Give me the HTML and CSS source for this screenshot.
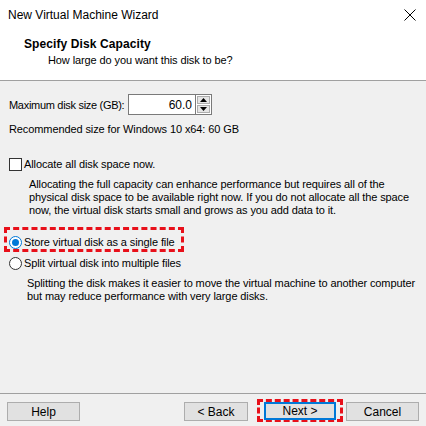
FILE: index.html
```html
<!DOCTYPE html>
<html>
<head>
<meta charset="utf-8">
<link rel="stylesheet" href="styles.css">
</head>
<body>
<div class="window">
  <div class="titlebar">
    <span class="title">New Virtual Machine Wizard</span>
    <svg class="close" width="12" height="12" viewBox="0 0 12 12"><path d="M0.5 0.5L11.5 11.5M11.5 0.5L0.5 11.5" stroke="#000" stroke-width="1"/></svg>
  </div>
  <div class="header">
    <div class="h-title">Specify Disk Capacity</div>
    <div class="h-sub">How large do you want this disk to be?</div>
  </div>
  <div class="body">
    <div class="size-row">
      <span class="label">Maximum disk size (GB):</span>
      <div class="spin">
        <div class="spin-input">60.0</div>
        <div class="spin-btns">
          <div class="spin-btn"><svg width="7" height="4" viewBox="0 0 7 4"><path d="M3.5 0L7 4H0z" fill="#000"/></svg></div>
          <div class="spin-btn"><svg width="7" height="4" viewBox="0 0 7 4"><path d="M0 0H7L3.5 4z" fill="#000"/></svg></div>
        </div>
      </div>
    </div>
    <div class="rec">Recommended size for Windows 10 x64: 60 GB</div>
    <div class="opt check-row">
      <span class="checkbox"></span>
      <span>Allocate all disk space now.</span>
    </div>
    <p class="desc d1">Allocating the full capacity can enhance performance but requires all of the<br>physical disk space to be available right now. If you do not allocate all the space<br>now, the virtual disk starts small and grows as you add data to it.</p>
    <div class="hl">
      <div class="opt">
        <span class="radio on"></span>
        <span>Store virtual disk as a single file</span>
      </div>
    </div>
    <div class="opt r2">
      <span class="radio"></span>
      <span>Split virtual disk into multiple files</span>
    </div>
    <p class="desc d2">Splitting the disk makes it easier to move the virtual machine to another computer<br>but may reduce performance with very large disks.</p>
  </div>
  <div class="footer">
    <button class="btn">Help</button>
    <div class="spacer"></div>
    <button class="btn back">&lt; Back</button>
    <div class="hl2"><button class="btn next">Next &gt;</button></div>
    <button class="btn cancel">Cancel</button>
  </div>
</div>
</body>
</html>
```
FILE: styles.css
```css
* { box-sizing: border-box; }
html, body { margin: 0; padding: 0; }
body {
  width: 426px; height: 426px; overflow: hidden;
  font-family: "Liberation Sans", Arial, sans-serif;
  font-size: 11px; letter-spacing: -0.1px; color: #000;
  background: #f0f0f0;
  white-space: nowrap;
}
.window { display: flex; flex-direction: column; height: 426px; }
.titlebar {
  height: 30px; background: #fff;
  display: flex; align-items: center; justify-content: space-between;
  padding: 0 9px 0 8px;
}
.title { font-size: 12px; letter-spacing: 0; }
.close { margin-right: 1px; }
.header {
  background: #fff; height: 51px;
  border-bottom: 1px solid #a0a0a0;
  padding-top: 7px;
}
.h-title { font-weight: bold; font-size: 12px; padding-left: 24px; line-height: 14px; letter-spacing: 0.1px; }
.h-sub { padding-left: 48px; line-height: 14px; margin-top: 2px; }
.body { flex: 1; padding: 13px 0 0 9px; }
.size-row { display: flex; align-items: center; height: 21px; }
.label { width: 119px; letter-spacing: -0.3px; }
.spin { display: flex; height: 21px; }
.spin-input {
  width: 67px; height: 21px; background: #fff;
  border: 1px solid #7a7a7a; border-right: none;
  text-align: right; padding: 3px 3px 0 0; font-size: 12px; letter-spacing: 0;
}
.spin-btns { display: flex; flex-direction: column; width: 17px; border: 1px solid #7a7a7a; background: #fff; padding: 1px; gap: 1px; }
.spin-btn { flex: 1; background: #e5e5e5; border: 1px solid #adadad; display: flex; align-items: center; justify-content: center; }
.rec { margin-top: 7px; line-height: 14px; }
.opt { display: flex; align-items: center; gap: 2px; height: 14px; }
.check-row { margin-top: 21px; }
.checkbox { width: 13px; height: 13px; border: 1px solid #333; background: #fff; }
.desc { margin: 7px 0 0 20px; line-height: 13px; }
.hl {
  margin: 10px 0 0 -5px; width: 180px; height: 25px;
  border: 3px dashed #e8101a; padding: 0 0 0 2px;
  display: flex; align-items: flex-end;
}
.radio {
  width: 13px; height: 13px; border-radius: 50%;
  border: 1px solid #333; background: #fff; position: relative;
}
.radio.on { border-color: #0078d7; }
.radio.on::after {
  content: ""; position: absolute; left: 2px; top: 2px;
  width: 7px; height: 7px; border-radius: 50%; background: #0078d7;
}
.r2 { margin-top: 4px; }
.d2 { margin-left: 18px; margin-top: 7px; }
.footer {
  height: 33px; border-top: 1px solid #a0a0a0;
  display: flex; align-items: flex-start; padding: 8px 7px 0 7px;
}
.spacer { flex: 1; }
.btn {
  width: 73px; height: 19px; background: #e1e1e1;
  border: 1px solid #adadad; font: inherit; font-size: 12px; letter-spacing: 0; color: #000;
  padding: 0; margin: 0;
}
.back { width: 64px; }
.hl2 {
  margin: -3px 0 0 9px; width: 86px; height: 23px;
  border: 3px dashed #e8101a;
  display: flex; align-items: center; justify-content: center;
}
.next { border: 2px solid #0078d7; width: 72px; height: 18px; }
.cancel { margin-left: 3px; }
```
